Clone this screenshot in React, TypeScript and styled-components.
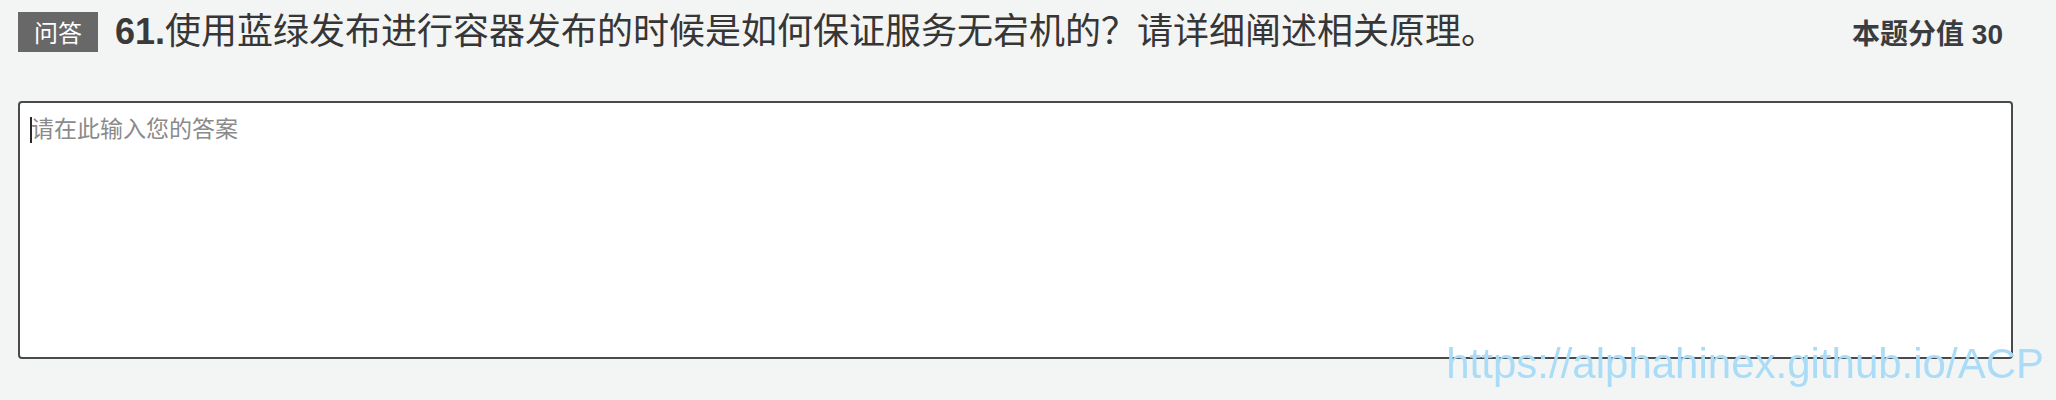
import React from "react";
import styled, { createGlobalStyle } from "styled-components";

const GlobalStyle = createGlobalStyle`
  html, body {
    margin: 0;
    padding: 0;
    background: #f3f4f4;
  }
  body {
    font-family: "Liberation Sans", "Noto Sans CJK SC", sans-serif;
    color: #333;
  }
`;

const Page = styled.div`
  width: 2056px;
  height: 400px;
  box-sizing: border-box;
  padding-top: 12px;
  display: flex;
  flex-direction: column;
  gap: 49px;
  background: #f3f4f4;
`;

const Header = styled.div`
  display: flex;
  align-items: center;
  padding: 0 53px 0 18px;
  height: 40px;
`;

const Badge = styled.span`
  display: inline-flex;
  align-items: center;
  justify-content: center;
  width: 80px;
  height: 40px;
  background: #686868;
  color: #fff;
  font-family: "Noto Sans CJK SC", sans-serif;
  font-size: 24px;
  line-height: 1;
  flex-shrink: 0;
`;

const Title = styled.h2`
  margin: 0 0 0 17px;
  flex: 1;
  font-family: "Liberation Sans", "Noto Sans CJK SC", sans-serif;
  font-size: 36px;
  font-weight: 400;
  line-height: 40px;
  color: #363636;
  white-space: nowrap;
`;

const Number = styled.span`
  font-weight: 700;
  color: #3a3a3a;
`;

const Score = styled.div`
  font-family: "Liberation Sans", "Noto Sans CJK SC", sans-serif;
  font-size: 28px;
  font-weight: 700;
  color: #3a3c40;
  white-space: nowrap;
`;

const AnswerBox = styled.div`
  position: relative;
  margin: 0 43px 0 18px;
`;

const Answer = styled.textarea`
  display: block;
  width: 100%;
  height: 258px;
  box-sizing: border-box;
  border: 2px solid #4a4a4a;
  border-radius: 4px;
  background: #fff;
  padding: 8px 11px;
  font-family: "Noto Sans CJK SC", sans-serif;
  font-size: 23px;
  line-height: 32px;
  color: #333;
  caret-color: transparent;
  resize: none;
  outline: none;

  &::placeholder {
    color: #8a8a8a;
  }
`;

const Caret = styled.span`
  position: absolute;
  left: 12px;
  top: 16px;
  width: 2px;
  height: 26px;
  background: #2a2a2a;
  pointer-events: none;
`;

const Watermark = styled.div`
  position: fixed;
  right: 12px;
  bottom: 12px;
  font-family: "Liberation Sans", sans-serif;
  font-size: 42px;
  line-height: 1.15;
  color: #aadcf7;
  pointer-events: none;
  white-space: nowrap;
`;

export default function App() {
  return (
    <>
      <GlobalStyle />
      <Page>
        <Header>
          <Badge>问答</Badge>
          <Title>
            <Number>61.</Number>使用蓝绿发布进行容器发布的时候是如何保证服务无宕机的？请详细阐述相关原理。
          </Title>
          <Score>本题分值 30</Score>
        </Header>
        <AnswerBox>
          <Answer placeholder="请在此输入您的答案" />
          <Caret />
        </AnswerBox>
      </Page>
      <Watermark>https://alphahinex.github.io/ACP</Watermark>
    </>
  );
}
